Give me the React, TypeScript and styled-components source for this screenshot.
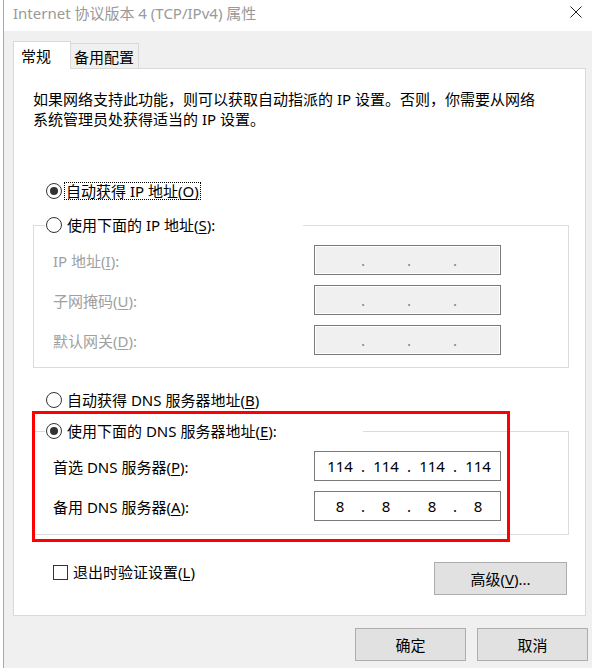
import { Fragment } from 'react';
import styled, { createGlobalStyle } from 'styled-components';

const GlobalStyle = createGlobalStyle`
  html, body {
    margin: 0;
    padding: 0;
    background: #fff;
  }

  body {
    font-family: "Noto Sans", "Noto Sans CJK SC", sans-serif;
    font-size: 15px;
    line-height: 20px;
    color: #000;
  }

  * {
    box-sizing: border-box;
  }
`;

const Screen = styled.div`
  width: 592px;
  height: 668px;
  display: flex;
  overflow: hidden;
`;

const Backdrop = styled.div`
  flex: none;
  width: 4px;
  background: #fff;
  border-right: 1px solid #a9a9a9;
`;

const Dialog = styled.div`
  flex: 1;
  display: flex;
  flex-direction: column;
  background: #f0f0f0;
`;

const TitleBar = styled.div`
  flex: none;
  height: 31px;
  display: flex;
  justify-content: space-between;
  align-items: flex-start;
  padding: 3px 10px 0 9px;
  background: #fff;
  color: #999;
`;

const CloseButton = styled.div`
  padding-top: 3px;
  line-height: 0;
`;

const Client = styled.div`
  display: flex;
  flex-direction: column;
  align-items: flex-start;
  padding: 10px 4px 0 9px;
`;

const TabBar = styled.div`
  display: flex;
  align-items: flex-end;
  height: 27px;
`;

const Tab = styled.div<{ $active?: boolean }>`
  position: relative;
  z-index: 1;
  height: ${p => (p.$active ? 28 : 25)}px;
  width: ${p => (p.$active ? 58 : 68)}px;
  margin-bottom: ${p => (p.$active ? -1 : 0)}px;
  padding: ${p => (p.$active ? '4px 0 0 7px' : '3px 0 0 3px')};
  border: 1px solid #d9d9d9;
  border-bottom: none;
  border-left: ${p => (p.$active ? '1px solid #d9d9d9' : 'none')};
  background: ${p => (p.$active ? '#fff' : '#f0f0f0')};
  white-space: nowrap;
`;

const Panel = styled.div`
  width: 573px;
  border: 1px solid #d9d9d9;
  background: #fff;
  padding: 20px 16px 20px 19px;
`;

const Description = styled.p`
  margin: 0;
`;

const RadioRow = styled.div<{ $mt?: number; $indent?: number }>`
  display: flex;
  align-items: center;
  gap: 5px;
  height: 20px;
  margin-top: ${p => p.$mt ?? 0}px;
  margin-left: ${p => p.$indent ?? 0}px;
  white-space: nowrap;
`;

const RadioDot = styled.span<{ $checked?: boolean }>`
  flex: none;
  width: 16px;
  height: 16px;
  border-radius: 50%;
  border: 1px solid #333;
  background: #fff;
  display: flex;
  align-items: center;
  justify-content: center;

  &::after {
    content: '';
    display: ${p => (p.$checked ? 'block' : 'none')};
    width: 8px;
    height: 8px;
    border-radius: 50%;
    background: #333;
  }
`;

const FocusText = styled.span`
  display: inline-block;
  line-height: 16px;
  padding: 0 1px;
  margin-left: -2px;
  outline: 1px dotted #000;
`;

const Key = styled.u`
  text-decoration: underline;
  text-underline-offset: 2px;
  text-decoration-thickness: 1px;
`;

const GroupBox = styled.fieldset<{ $mt?: number; $pb: number }>`
  margin: ${p => p.$mt ?? 0}px 0 0 0;
  min-width: 0;
  border: 1px solid #dcdcdc;
  padding: 10px 67px ${p => p.$pb}px 11px;
`;

const Legend = styled.legend<{ $width: number }>`
  width: ${p => p.$width}px;
  padding: 0 0 0 1px;
  margin: 0;
`;

const FieldList = styled.div`
  display: grid;
  grid-template-columns: 1fr 187px;
  row-gap: 10px;
  align-items: center;
  padding-left: 8px;
`;

const FieldLabel = styled.span<{ $disabled?: boolean }>`
  color: ${p => (p.$disabled ? '#a0a0a0' : '#000')};
  padding-top: 2px;
  white-space: nowrap;
`;

const IpBox = styled.div<{ $disabled?: boolean }>`
  height: 30px;
  display: flex;
  align-items: center;
  padding-left: 5px;
  border: 1px solid #7a7a7a;
  background: ${p => (p.$disabled ? '#f0f0f0' : '#fff')};
  box-shadow: ${p => (p.$disabled ? 'inset 0 0 0 1px #fff' : 'none')};
  color: ${p => (p.$disabled ? '#6f85a0' : '#000')};
`;

const Octet = styled.span`
  width: 40px;
  text-align: center;
`;

const Dot = styled.span`
  width: 6px;
  text-align: center;
`;

const DnsArea = styled.div`
  position: relative;
  margin-top: 11px;
`;

const Highlight = styled.div`
  position: absolute;
  left: -1px;
  top: -10px;
  width: 478px;
  height: 131px;
  border: 3px solid #ff0000;
  pointer-events: none;
`;

const BottomRow = styled.div`
  display: flex;
  justify-content: space-between;
  align-items: flex-start;
  margin-top: 27px;
  padding: 0 2px 0 20px;
`;

const CheckRow = styled.div`
  display: flex;
  align-items: center;
  gap: 5px;
`;

const CheckBox = styled.span`
  width: 15px;
  height: 15px;
  border: 1px solid #333;
  background: #fff;
`;

const Button = styled.button<{ $w: number }>`
  width: ${p => p.$w}px;
  height: 33px;
  padding: 0;
  border: 1px solid #adadad;
  border-radius: 0;
  background: #e1e1e1;
  color: #000;
  font: inherit;
`;

const Footer = styled.div`
  align-self: stretch;
  display: flex;
  justify-content: flex-end;
  gap: 11px;
  margin-top: 12px;
`;

const IpField = ({ value, disabled }: { value?: string[]; disabled?: boolean }) => {
  const parts = value ?? ['', '', '', ''];
  return (
    <IpBox $disabled={disabled}>
      {parts.map((p, i) => (
        <Fragment key={i}>
          <Octet>{p}</Octet>
          {i < 3 && <Dot>.</Dot>}
        </Fragment>
      ))}
    </IpBox>
  );
};

const App = () => {
  return (
    <Screen>
      <GlobalStyle />
      <Backdrop />
      <Dialog>
        <TitleBar>
          <span>Internet 协议版本 4 (TCP/IPv4) 属性</span>
          <CloseButton>
            <svg width="12" height="12" viewBox="0 0 12 12">
              <path d="M0.5 0.5 L11.5 11.5 M11.5 0.5 L0.5 11.5" stroke="#222" strokeWidth="1" fill="none" />
            </svg>
          </CloseButton>
        </TitleBar>

        <Client>
          <TabBar>
            <Tab $active>常规</Tab>
            <Tab>备用配置</Tab>
          </TabBar>

          <Panel>
            <Description>
              如果网络支持此功能，则可以获取自动指派的 IP 设置。否则，你需要从网络
              <br />
              系统管理员处获得适当的 IP 设置。
            </Description>

            <RadioRow $mt={52} $indent={13}>
              <RadioDot $checked />
              <FocusText>自动获得 IP 地址(<Key>O</Key>)</FocusText>
            </RadioRow>

            <GroupBox $mt={14} $pb={12}>
              <Legend $width={258}>
                <RadioRow>
                  <RadioDot />
                  <span>使用下面的 IP 地址(<Key>S</Key>):</span>
                </RadioRow>
              </Legend>
              <FieldList>
                <FieldLabel $disabled>IP 地址(<Key>I</Key>):</FieldLabel>
                <IpField disabled />
                <FieldLabel $disabled>子网掩码(<Key>U</Key>):</FieldLabel>
                <IpField disabled />
                <FieldLabel $disabled>默认网关(<Key>D</Key>):</FieldLabel>
                <IpField disabled />
              </FieldList>
            </GroupBox>

            <RadioRow $mt={22} $indent={13}>
              <RadioDot />
              <span>自动获得 DNS 服务器地址(<Key>B</Key>)</span>
            </RadioRow>

            <DnsArea>
              <GroupBox $pb={13}>
                <Legend $width={318}>
                  <RadioRow>
                    <RadioDot $checked />
                    <span>使用下面的 DNS 服务器地址(<Key>E</Key>):</span>
                  </RadioRow>
                </Legend>
                <FieldList>
                  <FieldLabel>首选 DNS 服务器(<Key>P</Key>):</FieldLabel>
                  <IpField value={['114', '114', '114', '114']} />
                  <FieldLabel>备用 DNS 服务器(<Key>A</Key>):</FieldLabel>
                  <IpField value={['8', '8', '8', '8']} />
                </FieldList>
              </GroupBox>
              <Highlight />
            </DnsArea>

            <BottomRow>
              <CheckRow>
                <CheckBox />
                <span>退出时验证设置(<Key>L</Key>)</span>
              </CheckRow>
              <Button $w={133}>高级(<Key>V</Key>)...</Button>
            </BottomRow>
          </Panel>

          <Footer>
            <Button $w={111}>确定</Button>
            <Button $w={111}>取消</Button>
          </Footer>
        </Client>
      </Dialog>
    </Screen>
  );
};

export default App;
